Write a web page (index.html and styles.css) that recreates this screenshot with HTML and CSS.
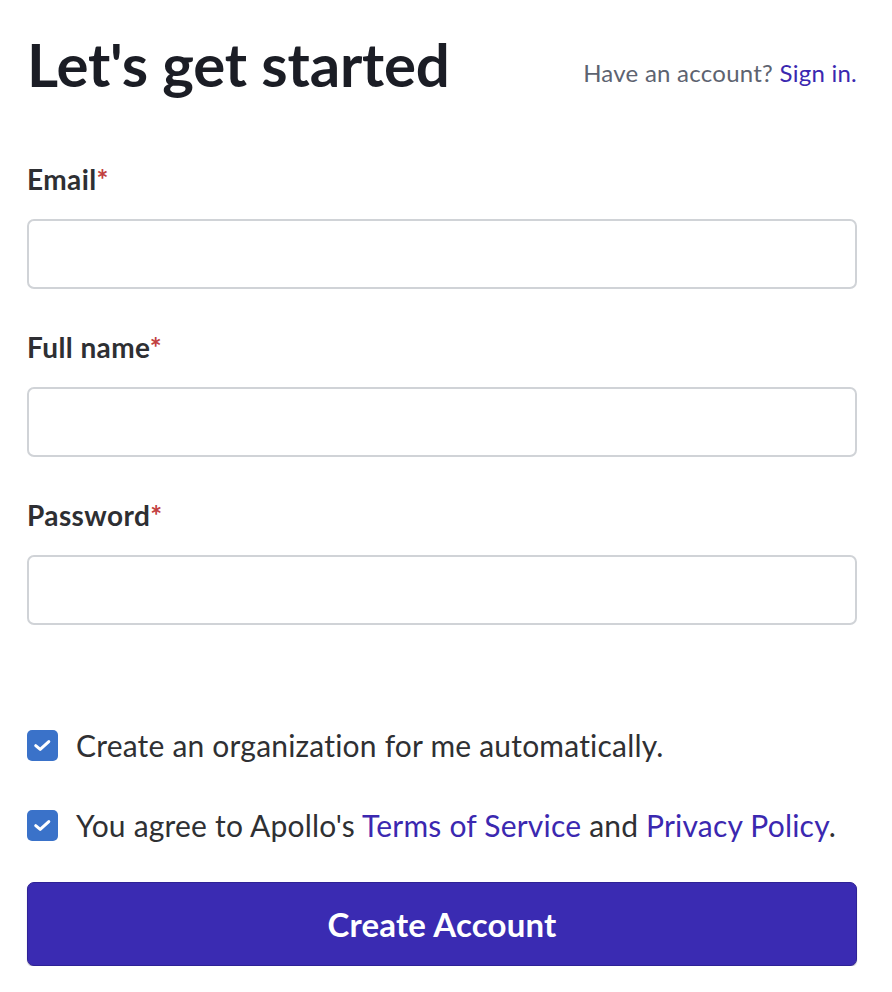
FILE: index.html
```html
<!DOCTYPE html>
<html lang="en">
<head>
<meta charset="utf-8">
<title>Let's get started</title>
<link rel="stylesheet" href="styles.css">
</head>
<body>
<main class="page">
  <header class="header">
    <h1 class="title">Let's get started</h1>
    <p class="signin">Have an account? <a href="#" class="link">Sign in.</a></p>
  </header>
  <form class="form">
    <div class="field">
      <label class="label">Email<span class="req">*</span></label>
      <input class="input" type="email">
    </div>
    <div class="field">
      <label class="label">Full name<span class="req">*</span></label>
      <input class="input" type="text">
    </div>
    <div class="field">
      <label class="label">Password<span class="req">*</span></label>
      <input class="input" type="password">
    </div>
    <div class="checks">
      <div class="check-row">
        <span class="box"><svg viewBox="0 0 31 31" width="31" height="31"><path d="M8.7 15.6 L13.2 19.4 L21.8 11.6" fill="none" stroke="#fff" stroke-width="3" stroke-linecap="round" stroke-linejoin="round"/></svg></span>
        <span class="check-text">Create an organization for me automatically.</span>
      </div>
      <div class="check-row">
        <span class="box"><svg viewBox="0 0 31 31" width="31" height="31"><path d="M8.7 15.6 L13.2 19.4 L21.8 11.6" fill="none" stroke="#fff" stroke-width="3" stroke-linecap="round" stroke-linejoin="round"/></svg></span>
        <span class="check-text">You agree to Apollo's <a href="#" class="link">Terms of Service</a> and <a href="#" class="link">Privacy Policy</a>.</span>
      </div>
    </div>
    <button type="button" class="submit">Create Account</button>
  </form>
</main>
</body>
</html>
```

FILE: styles.css
```css
html, body {
  margin: 0;
  padding: 0;
  background: #ffffff;
}
body {
  font-family: "Lato", "Open Sans", sans-serif;
  color: #2f3033;
}
.page {
  padding: 29px 35px 0 27px;
}
.header {
  display: flex;
  justify-content: space-between;
  align-items: flex-start;
}
.title {
  margin: 0;
  font-size: 60px;
  line-height: 70px;
  font-weight: 700;
  color: #1b1d25;
  letter-spacing: -0.2px;
}
.signin {
  margin: 30px 0 0;
  font-size: 24px;
  line-height: 28px;
  color: #5d6370;
  letter-spacing: 0.25px;
}
.link {
  color: #3b28b0;
  text-decoration: none;
}
.form {
  display: flex;
  flex-direction: column;
  margin-top: 64px;
}
.field {
  display: flex;
  flex-direction: column;
  gap: 24px;
  margin-bottom: 42px;
}
.label {
  font-size: 28px;
  line-height: 32px;
  font-weight: 700;
  color: #2e2f33;
  letter-spacing: 0.4px;
}
.req {
  color: #c24040;
}
.input {
  box-sizing: border-box;
  height: 70px;
  width: 100%;
  margin: 0;
  border: 2px solid #d0d3d7;
  border-radius: 7px;
  background: #fff;
  font: inherit;
}
.checks {
  display: flex;
  flex-direction: column;
  gap: 48px;
  margin-top: 62px;
}
.check-row {
  display: flex;
  align-items: center;
  gap: 18px;
}
.box {
  flex: none;
  width: 31px;
  height: 31px;
  border-radius: 5px;
  background: #3a72c9;
  display: flex;
}
.check-text {
  font-size: 30px;
  line-height: 32px;
  color: #2f3033;
  letter-spacing: 0.2px;
}
.submit {
  margin-top: 41px;
  height: 84px;
  width: 100%;
  border: 1px solid #2e2296;
  border-radius: 7px;
  background: #3a2bb2;
  box-shadow: 0 1px 1px rgba(20, 10, 80, 0.35);
  color: #ffffff;
  font-family: inherit;
  font-size: 33px;
  font-weight: 700;
  letter-spacing: 0.2px;
}
```
